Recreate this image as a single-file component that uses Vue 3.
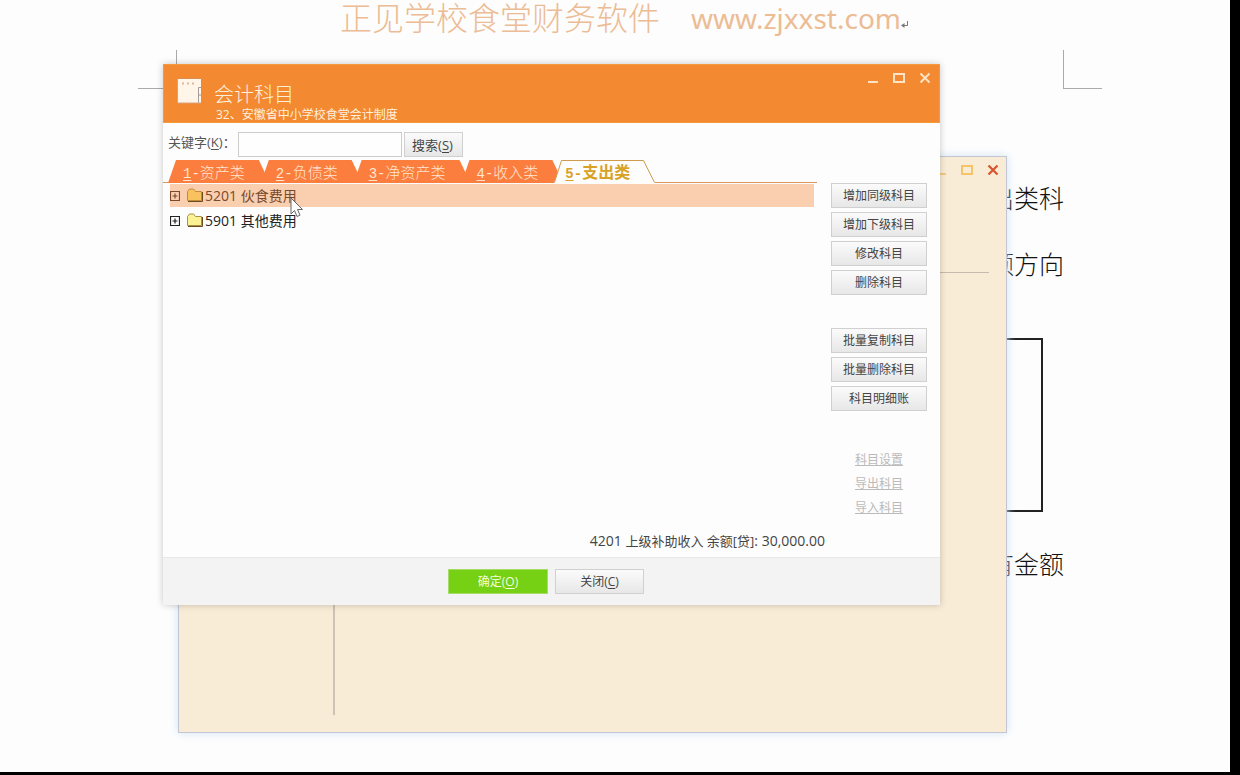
<script setup>
import { ref } from 'vue'

const keyword = ref('')
const activeTab = ref('5')
const selected = ref('5201')

const tabs = [
  { key: '1', name: '资产类' },
  { key: '2', name: '负债类' },
  { key: '3', name: '净资产类' },
  { key: '4', name: '收入类' },
  { key: '5', name: '支出类' },
]

const subjects = [
  { code: '5201', name: '伙食费用' },
  { code: '5901', name: '其他费用' },
]

const editActions = ['增加同级科目', '增加下级科目', '修改科目', '删除科目']
const batchActions = ['批量复制科目', '批量删除科目', '科目明细账']
const links = ['科目设置', '导出科目', '导入科目']
</script>

<template>
  <div class="screen">
    <div class="document">
      <header class="doc-header">
        <span>正见学校食堂财务软件</span>
        <span class="site">www.zjxxst.com</span>
        <svg class="return" width="8" height="8" viewBox="0 0 8 8">
          <path d="M6.500 0v4.500H2" fill="none" stroke="#777" />
          <path d="M0 4.500l3.500-2.500v5z" fill="#777" />
        </svg>
      </header>
      <div class="crops">
        <span class="crop crop-left"></span>
        <span class="crop crop-right"></span>
      </div>
      <p class="doc-line first">出类科</p>
      <p class="doc-line">额方向</p>
      <div class="doc-box"></div>
      <p class="doc-line">有金额</p>
    </div>

    <section class="back-window">
      <div class="back-head">
        <div class="controls back-controls">
          <button aria-label="最小化"><svg width="12" height="12" viewBox="0 0 12 12"><path d="M1 10h10" stroke="#f5c878" stroke-width="2" /></svg></button>
          <button aria-label="最大化"><svg width="12" height="12" viewBox="0 0 12 12"><rect x="1" y="2" width="10" height="8" fill="none" stroke="#f5c368" stroke-width="2" /></svg></button>
          <button aria-label="关闭"><svg width="12" height="12" viewBox="0 0 12 12"><path d="M1.500 1.500l9 9M10.500 1.500l-9 9" stroke="#d9532c" stroke-width="2.200" /></svg></button>
        </div>
      </div>
      <div class="back-body"></div>
    </section>

    <section class="dialog" role="dialog" aria-labelledby="dialog-title">
      <header class="dialog-head">
        <svg class="logo" width="25" height="26" viewBox="0 0 25 26">
          <path d="M0 .5h25" stroke="#dd8d4f" />
          <path d="M.5 1h24v24H.5z" fill="#fff5e9" />
          <path d="M5 5.500h2M10 5.500h2M15 5.500h2" stroke="#dfb8a0" stroke-width="2" />
          <path d="M.5 25h24M.5 1v24" fill="none" stroke="#d9a27a" />
          <path d="M24.500 9.500h-3v15M21.500 17h3M24.500 1v24" fill="none" stroke="#a79b98" />
        </svg>
        <div class="titles">
          <h1 id="dialog-title">会计科目</h1>
          <p>32、安徽省中小学校食堂会计制度</p>
        </div>
        <div class="controls">
          <button aria-label="最小化"><svg width="12" height="12" viewBox="0 0 12 12"><path d="M1 10h10" stroke="#ffe3c4" stroke-width="2" /></svg></button>
          <button aria-label="最大化"><svg width="12" height="12" viewBox="0 0 12 12"><rect x="1" y="2" width="10" height="8" fill="none" stroke="#ffe3c4" stroke-width="2" /></svg></button>
          <button aria-label="关闭"><svg width="12" height="12" viewBox="0 0 12 12"><path d="M1.500 1.500l9 9M10.500 1.500l-9 9" stroke="#ffe3c4" stroke-width="2" /></svg></button>
        </div>
      </header>

      <form class="search" @submit.prevent>
        <label for="keyword">关键字(<u>K</u>)：</label>
        <input id="keyword" v-model="keyword" type="text" />
        <button class="btn" type="submit">搜索(<u>S</u>)</button>
      </form>

      <div class="tabs" role="tablist">
        <button
          v-for="tab in tabs"
          :key="tab.key"
          class="tab"
          :class="{ active: activeTab === tab.key }"
          role="tab"
          :aria-selected="activeTab === tab.key"
          @click="activeTab = tab.key"
        >
          <svg v-if="activeTab === tab.key" class="outline" width="101" height="23" viewBox="0 0 101 23">
            <path d="M0 23L7.500 .5H89.500L101 23z" fill="#fdfdfd" />
            <path d="M.5 22.500L7.500 .5H89.500L100.500 22.500" fill="none" stroke="#cf9a4e" />
          </svg>
          <span class="tab-text"><span class="prefix"><u>{{ tab.key }}</u>-</span>{{ tab.name }}</span>
        </button>
      </div>

      <div class="main">
        <ul class="tree">
          <li v-for="item in subjects" :key="item.code" :class="{ selected: selected === item.code }" @click="selected = item.code">
            <svg class="plus" width="10" height="10" viewBox="0 0 10 10">
              <path d="M.5 .5h9v9h-9zM2.500 5h5M5 2.500v5" fill="none" stroke="currentColor" stroke-width="1.200" />
            </svg>
            <svg class="folder" width="16" height="15" viewBox="0 0 16 15">
              <path class="paper" d="M.5 12.500v-9l2-2.500h4l2 2.500h6v9z" stroke-width="1" />
              <path d="M1 13.500h14.500V4" fill="none" stroke="#6b4c22" />
            </svg>
            <span>{{ item.code }} {{ item.name }}</span>
            <svg v-if="selected === item.code" class="pointer" width="14" height="21" viewBox="0 0 14 21">
              <path d="M1 1v16l3.500-3.500L7 19.500l3-1.300-2.500-5.700h5z" fill="#fff" stroke="#666" />
            </svg>
          </li>
        </ul>
        <aside class="side">
          <div class="group">
            <button v-for="name in editActions" :key="name" class="btn">{{ name }}</button>
          </div>
          <div class="group batch">
            <button v-for="name in batchActions" :key="name" class="btn">{{ name }}</button>
          </div>
          <nav class="links">
            <a v-for="name in links" :key="name" href="#">{{ name }}</a>
          </nav>
        </aside>
      </div>

      <p class="status"><span class="figure">4201 </span>上级补助收入 余额[贷]<span class="figure">: 30,000.00</span></p>

      <footer class="dialog-foot">
        <button class="btn ok">确定(<u>O</u>)</button>
        <button class="btn cancel">关闭(<u>C</u>)</button>
      </footer>
    </section>
  </div>
</template>

<style>
body {
  margin: 0;
  background: #000;
}
</style>

<style scoped>
* {
  box-sizing: border-box;
}

.screen {
  position: relative;
  min-height: 100vh;
  border-right: 10px solid #000;
  border-bottom: 3px solid #000;
  background: #fdfdfd;
  color: #444;
  font-family: "Open Sans", "Noto Sans CJK SC", sans-serif;
  font-size: 13px;
}

button {
  padding: 0;
  font: inherit;
}

p,
h1,
ul {
  margin: 0;
  padding: 0;
}

.doc-header {
  display: flex;
  align-items: center;
  height: 38px;
  padding-left: 340px;
  color: #ecbc94;
  font-size: 32px;
  font-weight: 300;
  line-height: 36px;
  white-space: nowrap;
}

.doc-header span {
  height: 38px;
}

.site {
  margin-left: 31px;
  font-family: "Noto Sans", sans-serif;
  font-size: 28px;
  font-weight: 400;
}

.return {
  margin-top: 12px;
}

.crops {
  display: flex;
  justify-content: space-between;
  margin-top: 12px;
  padding: 0 128px 0 138px;
}

.crop {
  width: 39px;
  height: 39px;
  border-bottom: 1px solid #aaa;
}

.crop-left {
  border-right: 1px solid #aaa;
}

.crop-right {
  border-left: 1px solid #aaa;
}

.doc-line {
  padding-right: 166px;
  color: #111;
  font-family: "Liberation Serif", "Noto Sans CJK SC", serif;
  font-size: 25px;
  font-weight: 300;
  line-height: 66px;
  text-align: right;
}

.first {
  margin-top: 78px;
}

.doc-box {
  height: 174px;
  margin: 39px 187px 21px 176px;
  border: 2px solid #222;
}

.back-window {
  position: absolute;
  top: 156px;
  right: 223px;
  left: 178px;
  display: flex;
  flex-direction: column;
  height: 577px;
  padding-right: 17px;
  padding-bottom: 17px;
  border: 1px solid #c3c6d2;
  background: #f9ecd7;
  box-shadow: 0 0 9px #d3e3f5;
}

.back-head {
  height: 116px;
  border-bottom: 1px solid #c5bbb0;
}

.back-controls {
  margin-right: -10px;
}

.back-body {
  flex: 1;
  width: 156px;
  border-right: 2px solid #cdc2b5;
}

.controls {
  display: flex;
  justify-content: flex-end;
  gap: 14px;
  padding-top: 7px;
}

.controls button {
  display: block;
  width: 12px;
  height: 12px;
  border: 0;
  background: none;
}

.controls svg {
  display: block;
}

.dialog {
  position: absolute;
  top: 64px;
  right: 290px;
  left: 163px;
  background: #fdfdfd;
  box-shadow: 0 0 7px rgba(0, 0, 0, 0.22);
}

.dialog-head {
  display: flex;
  height: 59px;
  padding-right: 8px;
  padding-left: 13px;
  border: 1px solid #f49a38;
  background: #f38930;
  color: #fff0dc;
}

.logo {
  margin-top: 13px;
}

.titles {
  flex: 1;
  padding-top: 17px;
  padding-left: 12px;
}

h1 {
  font-size: 20px;
  font-weight: 300;
  line-height: 25px;
}

.titles p {
  padding-left: 2px;
  font-size: 12px;
  line-height: 16px;
}

.search {
  display: flex;
  padding: 9px 5px 3px;
}

.search label {
  width: 70px;
  color: #555;
  line-height: 20px;
  white-space: nowrap;
}

.search input {
  width: 164px;
  height: 25px;
  margin-right: 2px;
  padding: 0 4px;
  border: 1px solid #ccc;
  background: #fefefe;
  font: inherit;
}

.search .btn {
  width: 59px;
  padding-right: 2px;
  font-size: 13px;
}

.btn {
  height: 25px;
  border: 1px solid #d0d0d0;
  background: linear-gradient(#fbfbfb, #e7e7e7);
  color: #444;
  font-size: 12px;
  line-height: 20px;
  white-space: nowrap;
}

.tabs {
  display: flex;
  height: 23px;
  margin-right: 123px;
  padding-left: 5px;
  background: linear-gradient(#d9985a, #d9985a) bottom / 100% 1px no-repeat;
}

.tab {
  position: relative;
  padding: 2px 16px 0 15px;
  border: 0;
  background: none;
  color: #ffe6d2;
  font-size: 15px;
  font-weight: 300;
  line-height: 20px;
  white-space: nowrap;
}

.tab::before {
  content: "";
  position: absolute;
  inset: 0 -9px 0 0;
  background: #fc7e3e;
  clip-path: polygon(8px 0, calc(100% - 11px) 0, 100% 100%, 0 100%);
}

.tab-text {
  position: relative;
}

.prefix {
  font-family: "Liberation Mono", monospace;
  font-size: 14px;
}

.tab.active {
  padding-left: 11px;
  color: #d9a224;
  font-size: 16px;
  font-weight: 700;
}

.tab.active::before {
  display: none;
}

.outline {
  position: absolute;
  top: 0;
  left: 0;
}

u {
  text-underline-offset: 2px;
}

.main {
  display: flex;
  gap: 17px;
  padding: 0 13px 0 7px;
}

.tree {
  flex: 1;
  padding-top: 1px;
  list-style: none;
}

.tree li {
  position: relative;
  display: flex;
  align-items: center;
  height: 23px;
  margin-bottom: 2px;
  color: #222;
  font-size: 14px;
  line-height: 24px;
}

.tree .selected {
  background: #facfb0;
  color: #7a4a2c;
}

.plus {
  margin-right: 7px;
}

.folder {
  margin-right: 2px;
}

.paper {
  fill: #fbf293;
  stroke: #a89148;
}

.selected .paper {
  fill: #f8c35e;
  stroke: #c48a3a;
}

.pointer {
  position: absolute;
  top: 13px;
  left: 120px;
  z-index: 1;
}

.side {
  width: 96px;
}

.group {
  display: flex;
  flex-direction: column;
  gap: 4px;
}

.batch {
  margin-top: 33px;
}

.links {
  display: flex;
  flex-direction: column;
  align-items: center;
  margin-top: 37px;
}

.links a {
  color: #bbb;
  font-size: 12px;
  line-height: 24px;
}

.status {
  padding: 11px 115px 6px 0;
  line-height: 20px;
  text-align: right;
}

.figure {
  font-size: 14px;
  white-space: pre;
}

.dialog-foot {
  display: flex;
  justify-content: center;
  gap: 7px;
  padding: 11px 11px 11px 0;
  border-top: 1px solid #e8e8e8;
  background: #f3f3f3;
}

.dialog-foot .ok {
  width: 100px;
  border-color: #a6dc66;
  background: #76d014;
  color: #efffdc;
}

.dialog-foot .cancel {
  width: 89px;
}
</style>
